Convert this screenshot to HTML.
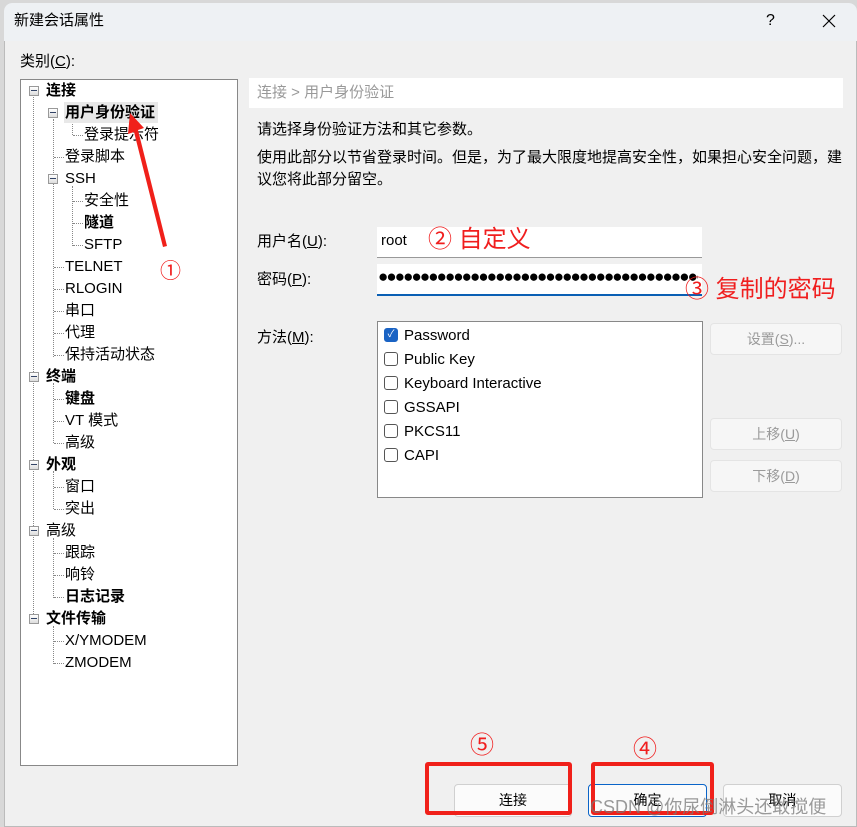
<!DOCTYPE html>
<html><head><meta charset="utf-8"><style>
*{margin:0;padding:0;box-sizing:border-box}
body{width:857px;height:827px;overflow:hidden;background:#d8d8d8;font-family:"Liberation Sans","Noto Sans CJK SC",sans-serif;font-size:15px;color:#000;position:relative}
.dlg{position:absolute;left:4px;top:3px;width:853px;height:824px;background:#f0f0f0;border:1px solid #bbb;border-radius:8px 8px 0 0;overflow:hidden}
.a{position:absolute;white-space:nowrap;line-height:20px}
.tree{position:absolute;left:20px;top:79px;width:218px;height:687px;background:#fff;border:1px solid #888}
.exp{position:absolute;width:10px;height:10px;border:1px solid #999;background:linear-gradient(#fff,#ddd)}
.exp:after{content:"";position:absolute;left:1px;top:3px;width:6px;height:1px;background:#346}
.vl{position:absolute;border-left:1px dotted #888}
.hl{position:absolute;border-top:1px dotted #888;width:10px}
.b{font-weight:bold}
.inp{position:absolute;background:#fff;border-bottom:1px solid #999}
.btn{position:absolute;background:#fbfbfb;border:1px solid #d0d0d0;border-radius:4px;text-align:center;line-height:30px;color:#000;font-size:14px}
.dis{color:#9a9a9a;background:#f6f6f6;border-color:#e4e4e4}
.cb{position:absolute;left:384px;width:14px;height:14px;border:1px solid #555;border-radius:3px;background:#fff}
.red{color:#f01e1e}
.rb{position:absolute;border:4px solid #f0201a;border-radius:3px}
</style></head><body>
<div class="dlg"></div>
<div style="left:4px;top:3px;width:853px;height:38px;position:absolute;border-radius:8px 8px 0 0;background:#eef1f4"></div>
<div class="a" style="left:14px;top:11px;font-size:15px">新建会话属性</div>
<div class="a" style="left:766px;top:11px;font-size:16px">?</div>
<svg style="position:absolute;left:822px;top:14px" width="14" height="14"><path d="M1 1L13 13M13 1L1 13" stroke="#000" stroke-width="1.2"/></svg>
<div class="a" style="left:20px;top:52px">类别(<u>C</u>):</div>
<div class="tree"></div>
<div class="vl" style="left:33px;top:97px;height:525px"></div>
<div class="vl" style="left:53px;top:119px;height:238px"></div>
<div class="vl" style="left:72px;top:119px;height:16px"></div>
<div class="vl" style="left:72px;top:186px;height:60px"></div>
<div class="vl" style="left:53px;top:383px;height:60px"></div>
<div class="vl" style="left:53px;top:471px;height:38px"></div>
<div class="vl" style="left:53px;top:538px;height:60px"></div>
<div class="vl" style="left:53px;top:626px;height:38px"></div>
<div class="exp" style="left:29px;top:86px"></div><div class="a b" style="left:46px;top:81px">连接</div>
<div style="position:absolute;left:64px;top:102px;width:94px;height:21px;background:#e8e8e8"></div>
<div class="exp" style="left:48px;top:108px"></div><div class="a b" style="left:65px;top:103px">用户身份验证</div>
<div class="hl" style="left:73px;top:135px"></div><div class="a" style="left:84px;top:125px">登录提示符</div>
<div class="hl" style="left:54px;top:157px"></div><div class="a" style="left:65px;top:147px">登录脚本</div>
<div class="exp" style="left:48px;top:174px"></div><div class="a" style="left:65px;top:169px">SSH</div>
<div class="hl" style="left:73px;top:201px"></div><div class="a" style="left:84px;top:191px">安全性</div>
<div class="hl" style="left:73px;top:223px"></div><div class="a b" style="left:84px;top:213px">隧道</div>
<div class="hl" style="left:73px;top:245px"></div><div class="a" style="left:84px;top:235px">SFTP</div>
<div class="hl" style="left:54px;top:267px"></div><div class="a" style="left:65px;top:257px">TELNET</div>
<div class="hl" style="left:54px;top:289px"></div><div class="a" style="left:65px;top:279px">RLOGIN</div>
<div class="hl" style="left:54px;top:311px"></div><div class="a" style="left:65px;top:301px">串口</div>
<div class="hl" style="left:54px;top:333px"></div><div class="a" style="left:65px;top:323px">代理</div>
<div class="hl" style="left:54px;top:355px"></div><div class="a" style="left:65px;top:345px">保持活动状态</div>
<div class="exp" style="left:29px;top:372px"></div><div class="a b" style="left:46px;top:367px">终端</div>
<div class="hl" style="left:54px;top:399px"></div><div class="a b" style="left:65px;top:389px">键盘</div>
<div class="hl" style="left:54px;top:421px"></div><div class="a" style="left:65px;top:411px">VT 模式</div>
<div class="hl" style="left:54px;top:443px"></div><div class="a" style="left:65px;top:433px">高级</div>
<div class="exp" style="left:29px;top:460px"></div><div class="a b" style="left:46px;top:455px">外观</div>
<div class="hl" style="left:54px;top:487px"></div><div class="a" style="left:65px;top:477px">窗口</div>
<div class="hl" style="left:54px;top:509px"></div><div class="a" style="left:65px;top:499px">突出</div>
<div class="exp" style="left:29px;top:526px"></div><div class="a" style="left:46px;top:521px">高级</div>
<div class="hl" style="left:54px;top:553px"></div><div class="a" style="left:65px;top:543px">跟踪</div>
<div class="hl" style="left:54px;top:575px"></div><div class="a" style="left:65px;top:565px">响铃</div>
<div class="hl" style="left:54px;top:597px"></div><div class="a b" style="left:65px;top:587px">日志记录</div>
<div class="exp" style="left:29px;top:614px"></div><div class="a b" style="left:46px;top:609px">文件传输</div>
<div class="hl" style="left:54px;top:641px"></div><div class="a" style="left:65px;top:631px">X/YMODEM</div>
<div class="hl" style="left:54px;top:663px"></div><div class="a" style="left:65px;top:653px">ZMODEM</div>

<div style="position:absolute;left:249px;top:78px;width:594px;height:30px;background:#fff"></div>
<div class="a" style="left:257px;top:83px;color:#999">连接 &gt; 用户身份验证</div>
<div class="a" style="left:257px;top:120px">请选择身份验证方法和其它参数。</div>
<div class="a" style="left:257px;top:148px">使用此部分以节省登录时间。但是，为了最大限度地提高安全性，如果担心安全问题，建</div>
<div class="a" style="left:257px;top:170px">议您将此部分留空。</div>
<div class="a" style="left:257px;top:232px">用户名(<u>U</u>):</div>
<div class="inp" style="left:377px;top:227px;width:325px;height:31px"></div>
<div class="a" style="left:381px;top:231px;font-size:15px">root</div>
<div class="a" style="left:257px;top:270px">密码(<u>P</u>):</div>
<div class="inp" style="left:377px;top:264px;width:325px;height:32px;border-bottom:2px solid #0a5fb4"></div>
<div class="a" style="left:378px;top:267px;font-size:17px;letter-spacing:-1.9px;overflow:hidden;width:320px">●●●●●●●●●●●●●●●●●●●●●●●●●●●●●●●●●●●●●●●●●●</div>
<div class="a" style="left:257px;top:328px">方法(<u>M</u>):</div>
<div style="position:absolute;left:377px;top:321px;width:326px;height:177px;background:#fff;border:1px solid #888"></div>
<div class="cb" style="top:328px;background:#1a63c4;border-color:#1a63c4;color:#fff;font-size:10px;line-height:12px;text-align:center">✓</div><div class="a" style="left:404px;top:326px;font-size:15px">Password</div>
<div class="cb" style="top:352px"></div><div class="a" style="left:404px;top:350px;font-size:15px">Public Key</div>
<div class="cb" style="top:376px"></div><div class="a" style="left:404px;top:374px;font-size:15px">Keyboard Interactive</div>
<div class="cb" style="top:400px"></div><div class="a" style="left:404px;top:398px;font-size:15px">GSSAPI</div>
<div class="cb" style="top:424px"></div><div class="a" style="left:404px;top:422px;font-size:15px">PKCS11</div>
<div class="cb" style="top:448px"></div><div class="a" style="left:404px;top:446px;font-size:15px">CAPI</div>
<div class="btn dis" style="left:710px;top:323px;width:132px;height:32px">设置(<u>S</u>)...</div>
<div class="btn dis" style="left:710px;top:418px;width:132px;height:32px">上移(<u>U</u>)</div>
<div class="btn dis" style="left:710px;top:460px;width:132px;height:32px">下移(<u>D</u>)</div>

<div class="btn" style="left:454px;top:784px;width:118px;height:33px">连接</div>
<div class="btn" style="left:588px;top:784px;width:119px;height:33px;border-color:#0a64c8">确定</div>
<div class="btn" style="left:723px;top:784px;width:119px;height:33px">取消</div>
<div class="rb" style="left:425px;top:762px;width:147px;height:53px"></div>
<div class="rb" style="left:591px;top:762px;width:123px;height:53px"></div>

<div class="a red" style="left:160px;top:260px;font-size:21px;line-height:24px">①</div>
<div class="a red" style="left:428px;top:226px;font-size:24px;line-height:28px">② 自定义</div>
<div class="a red" style="left:685px;top:276px;font-size:24px;line-height:28px">③ 复制的密码</div>
<div class="a red" style="left:633px;top:736px;font-size:24px;line-height:28px">④</div>
<div class="a red" style="left:470px;top:732px;font-size:24px;line-height:28px">⑤</div>
<svg style="position:absolute;left:0;top:0" width="857" height="827"><polygon points="167,246 163,247 134,132 128,134 130,113 144,128 138,130" fill="#f0201a"/></svg>
<div class="a" style="left:590px;top:797px;font-size:18px;color:rgba(120,120,120,.75)">CSDN @你尿倒淋头还敢搅便</div>
</body></html>
